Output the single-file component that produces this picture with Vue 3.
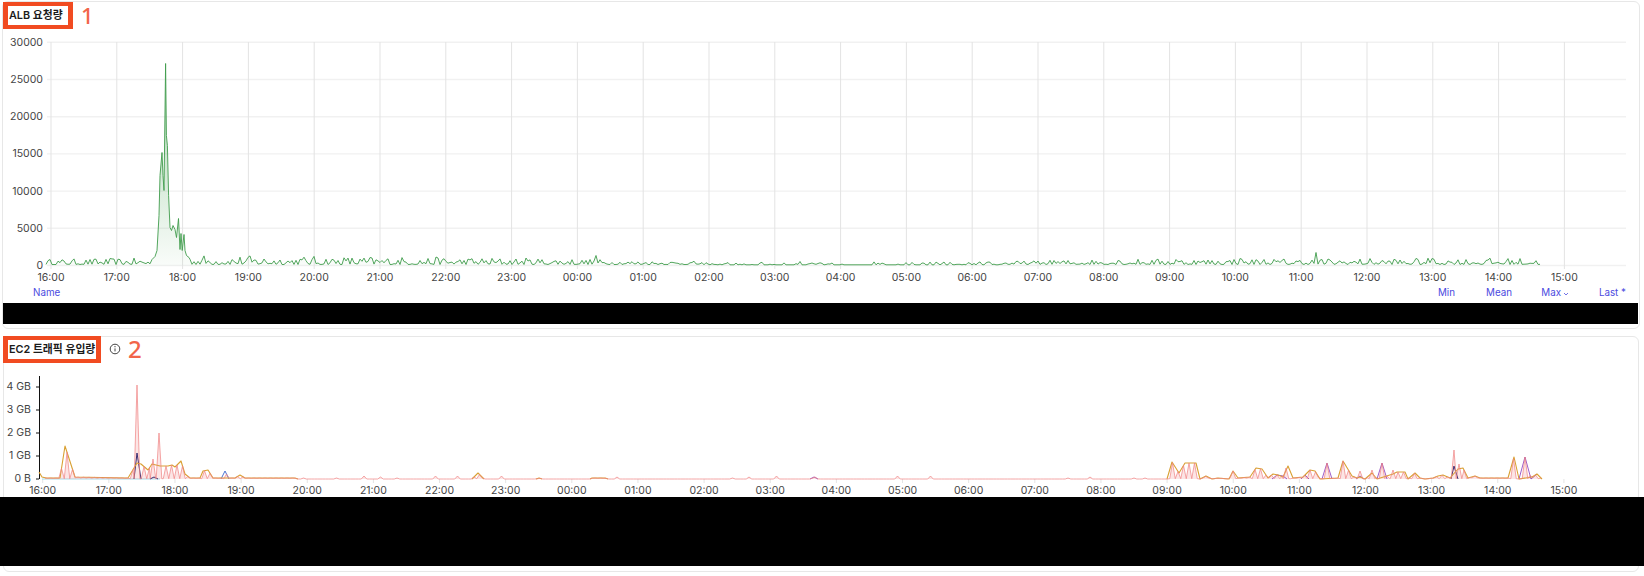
<script setup>
const hours = Array.from({ length: 24 }, (_, i) => String((16 + i) % 24).padStart(2, '0') + ':00')

/* ---------- ALB chart: values in pixels above the baseline ---------- */
const X0 = 51, XSTEP = 65.8, BASE1 = 265.5
const grid1X = hours.map((h, i) => X0 + i * XSTEP)
const yLabels1 = ['30000', '25000', '20000', '15000', '10000', '5000', '0'].map((t, i) => ({ t, y: 42.3 + i * 37.2 }))

let seed = 12345
const rnd = () => ((seed = (seed * 16807) % 2147483647) / 2147483647)

const ampStops = [[46, 5], [150, 6], [190, 9], [260, 8], [420, 7], [560, 6], [640, 3.5], [800, 2.4], [1000, 2.8], [1100, 5], [1250, 5.5], [1560, 6]]
const lerp = (stops, x) => {
  if (x <= stops[0][0]) return stops[0][1]
  for (let i = 1; i < stops.length; i++) {
    if (x <= stops[i][0]) {
      const [a, b] = [stops[i - 1], stops[i]]
      return a[1] + ((b[1] - a[1]) * (x - a[0])) / (b[0] - a[0])
    }
  }
  return stops[stops.length - 1][1]
}
const spike = [
  [152, 6], [155, 9], [157, 15], [159, 50], [160, 90], [162, 113], [163, 90], [164, 75], [165.6, 202],
  [166.4, 130], [167.4, 120], [168.6, 70], [170, 38], [171.5, 35], [173, 40], [175, 36], [176.5, 28],
  [178.5, 47], [180, 16], [181, 32], [182.2, 15], [184, 31], [185, 15], [186.5, 10], [189, 8]
]
const spot = { 596: 10, 1316: 13, 1240: 7, 1176: 6, 1234: 6, 1432: 7, 1054: 5, 1118: 5, 800: 4, 1264: 6 }
const pts1 = []
for (let x = 46; x <= 1541; x += 2) {
  if (x >= 152 && x <= 189) continue
  const r = rnd()
  let h = 1 + lerp(ampStops, x) * r * r * 1.1
  if (x > 700 && x < 1000 && rnd() < 0.55) h = 0.7
  if (spot[x]) h = spot[x]
  pts1.push([x, h])
}
const merged = [...pts1, ...spike].sort((a, b) => a[0] - b[0])
const line1 = merged.map(([x, h]) => `${x},${(BASE1 - h).toFixed(1)}`).join(' ')
const area1 = `M46,${BASE1} L` + merged.map(([x, h]) => `${x},${(BASE1 - h).toFixed(1)}`).join(' L') + ` L1541,${BASE1} Z`

/* ---------- EC2 chart ---------- */
const BASE2 = 479, X2 = 42.7, STEP2 = 66.14
const ticks2 = hours.map((h, i) => X2 + i * STEP2)
const yLabels2 = ['4 GB', '3 GB', '2 GB', '1 GB', '0 B'].map((t, i) => ({ t, y: 387 + i * 23 }))

const gold = [
  [39, 7], [42, 2], [46, 1], [60, 1], [65, 33], [75, 2], [128, 1], [137, 16], [141, 15], [148, 9], [152, 15], [160, 13],
  [168, 13], [172, 14], [175, 12], [181, 18], [185, 5], [190, 1], [200, 1], [203, 8], [208, 9], [213, 1], [235, 1],
  [240, 4], [245, 1], [295, 1], [298, 0], [472, 0], [478, 6], [484, 0], [536, 0], [539, 1], [542, 0], [590, 0], [592, 1], [605, 1], [608, 0],
  [1167, 0], [1172, 17], [1179, 6], [1185, 16], [1196, 16], [1200, 0], [1206, 3], [1212, 0], [1218, 1], [1229, 0],
  [1233, 8], [1238, 1], [1250, 2], [1256, 11], [1262, 10], [1268, 1], [1273, 5], [1278, 4], [1283, 2], [1288, 13],
  [1293, 1], [1303, 2], [1310, 9], [1315, 8], [1320, 0], [1338, 1], [1343, 18], [1352, 3], [1357, 1], [1360, 2],
  [1365, 0], [1372, 6], [1377, 0], [1393, 5], [1397, 7], [1405, 7], [1408, 0], [1415, 6], [1420, 1], [1425, 0],
  [1433, 1], [1438, 3], [1443, 4], [1450, 1], [1458, 10], [1463, 11], [1468, 1], [1475, 3], [1480, 1], [1493, 1],
  [1508, 1], [1514, 22], [1519, 0], [1532, 2], [1537, 5], [1542, 0]
]
const purple = [
  [[1322, 0], [1327, 16], [1332, 0]], [[1377, 0], [1382, 16], [1387, 0]], [[1519, 0], [1525, 22], [1531, 0], [1537, 5], [1542, 0]],
  [[1272, 0], [1277, 4], [1283, 3], [1287, 0]], [[1301, 0], [1305, 4], [1309, 0]], [[1356, 0], [1360, 3], [1364, 0]], [[810, 0], [814, 2], [818, 0]]
]
const navy = [[[134, 0], [137, 26], [141, 0]], [[150, 0], [154, 2], [158, 0]], [[1451, 0], [1454, 13], [1458, 0]]]
const blue = [[221, 0], [225, 8], [229, 0]]
const bumps = { 225: 9, 230: 3, 258: 1.5, 303: 1, 313: 1, 337: 1, 363: 3, 368: 1, 380: 2, 397: 1, 435: 3, 457: 3, 487: 1, 501: 3,
  617: 2, 647: 1, 733: 1, 748: 2, 777: 3, 814: 2, 897: 3, 931: 3, 1069: 1, 1091: 2, 1135: 1, 1146: 1 }
const spikes2 = { 137: 94, 153: 20, 159: 46, 1454: 29, 1459: 15, 1327: 16, 1382: 16, 1525: 22, 1360: 8, 1372: 9, 1393: 9, 1286: 11 }

const envelope = (x) => {
  let v = lerp(gold, x)
  for (const p of purple) if (x >= p[0][0] && x <= p[p.length - 1][0]) v = Math.max(v, lerp(p, x))
  v = Math.max(v, x >= 221 && x <= 229 ? lerp(blue, x) : 0)
  return v
}
let pinkPts = []
for (let x = 45; x <= 1542; x += 2.75) {
  const tooth = Math.round((x - 45) / 2.75) % 2 === 0
  let v = tooth ? envelope(x) : envelope(x) > 3 ? 0.3 : envelope(x) * 0.6
  for (const k in bumps) if (Math.abs(x - k) < 1.5 && tooth) v = bumps[k]
  pinkPts.push([x, v])
}
for (const k in spikes2) {
  const x = +k
  pinkPts = pinkPts.filter((p) => Math.abs(p[0] - x) >= 3)
  pinkPts.push([x - 2.8, 0.3], [x, spikes2[k]], [x + 2.8, 0.3])
}
pinkPts.sort((a, b) => a[0] - b[0])
const toPts = (arr) => arr.map(([x, h]) => `${x},${(BASE2 - h).toFixed(1)}`).join(' ')

/* gold series only exists where traffic was recorded: split at long flat gaps */
const goldSegs = []
let seg = [gold[0]]
for (let i = 1; i < gold.length; i++) {
  if (gold[i][1] === 0 && gold[i - 1][1] === 0 && gold[i][0] - gold[i - 1][0] > 20) {
    goldSegs.push(seg)
    seg = [gold[i]]
  } else seg.push(gold[i])
}
goldSegs.push(seg)
const goldLines = goldSegs.map(toPts)
const pinkLine = toPts(pinkPts)
const pinkArea = `M45,${BASE2} L` + pinkPts.map(([x, h]) => `${x},${(BASE2 - h).toFixed(1)}`).join(' L') + ` L1542,${BASE2} Z`
const purpleLines = purple.map(toPts)
const navyLines = navy.map(toPts)
const blueLine = toPts(blue)
</script>

<template>
  <div class="page">
    <section class="panel first">
      <header class="head">
        <h2 class="title box-a">ALB 요청량</h2>
        <span class="mark mark-a">1</span>
      </header>
      <svg class="chart" width="1636" height="256" viewBox="3 29 1636 256">
        <defs>
          <linearGradient id="green-fade" x1="0" y1="0" x2="0" y2="1" gradientUnits="objectBoundingBox">
            <stop offset="0" stop-color="#3f9d4b" stop-opacity="0.45" />
            <stop offset="1" stop-color="#3f9d4b" stop-opacity="0.03" />
          </linearGradient>
        </defs>
        <g class="grid-h">
          <line v-for="l in yLabels1" :key="l.t" x1="47" x2="1626" :y1="l.y" :y2="l.y" />
        </g>
        <g class="grid-v">
          <line v-for="x in grid1X" :key="x" :x1="x" :x2="x" y1="42" y2="269" />
        </g>
        <text v-for="l in yLabels1" :key="l.t" class="lbl" x="43" :y="l.y + 3.4" text-anchor="end">{{ l.t }}</text>
        <path :d="area1" fill="url(#green-fade)" />
        <polyline :points="line1" class="green" />
        <text v-for="(h, i) in hours" :key="h" class="lbl" :x="grid1X[i]" y="281" text-anchor="middle">{{ h }}</text>
      </svg>
      <div class="legend">
        <span class="col-name">Name</span>
        <span class="col">Min</span>
        <span class="col">Mean</span>
        <span class="col">Max<svg class="chev" width="6" height="4" viewBox="0 0 6 4"><path d="M1 1l2 2 2-2" fill="none" stroke="#4f4fe0" stroke-width=".8" /></svg></span>
        <span class="col">Last *</span>
      </div>
      <div class="redact bar-a"></div>
    </section>

    <section class="panel second">
      <header class="head head-b">
        <h2 class="title box-b">EC2 트래픽 유입량</h2>
        <svg class="info" width="12" height="12" viewBox="0 0 12 12">
          <circle cx="6" cy="6" r="4.8" fill="none" stroke="#444" stroke-width="1" />
          <path d="M6 5.4v3" stroke="#444" stroke-width="1" />
          <circle cx="6" cy="3.7" r=".65" fill="#444" />
        </svg>
        <span class="mark mark-b">2</span>
      </header>
      <svg class="chart" width="1634" height="134" viewBox="4 363 1634 134">
        <line x1="39.5" x2="39.5" y1="376" y2="479" class="axis" />
        <line v-for="l in yLabels2" :key="l.t" x1="36" x2="39" :y1="l.y" :y2="l.y" class="axis" />
        <text v-for="l in yLabels2" :key="l.t" class="lbl" x="31" :y="l.y + 3" text-anchor="end">{{ l.t }}</text>
        <line v-for="x in ticks2" :key="x" :x1="x" :x2="x" y1="479" y2="483" class="tick" />
        <text v-for="(h, i) in hours" :key="h" class="lbl" :x="ticks2[i]" y="493.5" text-anchor="middle">{{ h }}</text>
        <line x1="42" x2="160" y1="479" y2="479" class="cyan" />
        <path :d="pinkArea" class="pink-fill" />
        <polyline :points="blueLine" class="s-blue" />
        <polyline v-for="p in navyLines" :key="p" :points="p" class="s-navy" />
        <polyline v-for="p in purpleLines" :key="p" :points="p" class="s-purple" />
        <polyline v-for="p in goldLines" :key="p" :points="p" class="s-gold" />
        <polyline :points="pinkLine" class="s-pink" />
      </svg>
      <div class="redact bar-b"></div>
    </section>
  </div>
</template>

<style>
html, body { margin: 0; background: #fff; }
</style>

<style scoped>
.page {
  width: 1644px;
  height: 576px;
  overflow: hidden;
  padding-top: 1px;
  box-sizing: border-box;
  background: #fff;
  font-family: Inter, "Noto Sans CJK KR", sans-serif;
}
.panel {
  box-sizing: border-box;
  margin: 0 4px 0 2px;
  border: 1px solid #e7e7e7;
  border-radius: 6px;
  display: flex;
  flex-direction: column;
}
.first { height: 328px; }
.second { height: 236px; margin: 7px 5px 0 3px; }
.head {
  height: 27px;
  display: flex;
  align-items: center;
  flex: none;
}
.head-b { margin-top: -1px; margin-left: -1px; }
.title {
  box-sizing: border-box;
  height: 27px;
  margin: 0;
  border: solid #f14b21;
  border-width: 4px 5px;
  padding: 0 0 3px 1px;
  display: flex;
  align-items: center;
  font-size: 10.8px;
  font-weight: 600;
  color: #1b1b1b;
  white-space: nowrap;
}
.box-a { width: 70px; }
.box-b { width: 98px; }
.mark {
  font-family: "Noto Sans", sans-serif;
  font-weight: 500;
  color: #f2654a;
  line-height: 1;
}
.mark-a { font-size: 22px; margin: -2px 0 0 8px; }
.mark-b { font-size: 24px; margin: -2px 0 0 7px; }
.info { margin-left: 8px; margin-top: -2px; flex: none; }
.chart { display: block; flex: none; overflow: visible; }
.lbl { font-size: 10.5px; fill: #444; font-family: Inter, sans-serif; }
.grid-h line { stroke: #f1f1f1; stroke-width: 1.4; }
.grid-v line { stroke: #e3e3e3; stroke-width: 1; }
.green { fill: none; stroke: #3f9c4c; stroke-width: 0.9; stroke-linejoin: round; }
.axis { stroke: #111; stroke-width: 1; }
.tick { stroke: #e4e4e4; stroke-width: 1; }
.cyan { stroke: #a8dcea; stroke-width: 1.2; }
.pink-fill { fill: #f08a8a; fill-opacity: 0.22; stroke: none; }
.s-pink { fill: none; stroke: #ef8484; stroke-width: 0.85; stroke-linejoin: round; stroke-opacity: 0.85; }
.s-gold { fill: none; stroke: #d9a032; stroke-width: 1.1; stroke-linejoin: round; }
.s-purple { fill: none; stroke: #8a3fc0; stroke-width: 1; stroke-opacity: 0.85; }
.s-navy { fill: none; stroke: #3a2c70; stroke-width: 1; }
.s-blue { fill: none; stroke: #4d74d2; stroke-width: 1; }
.legend {
  height: 18px;
  flex: none;
  display: grid;
  grid-template-columns: 1fr repeat(4, 57px);
  align-items: center;
  padding: 0 13px 4px 30px;
  box-sizing: border-box;
  font-size: 9.8px;
  color: #4a4ae0;
}
.col { text-align: right; white-space: nowrap; }
.chev { vertical-align: 0; margin-left: 2px; }
.redact { background: #000; flex: none; }
.bar-a { height: 21px; margin-right: 1px; }
.bar-b { height: 69px; margin: 0 -6px 0 -4px; }
</style>
